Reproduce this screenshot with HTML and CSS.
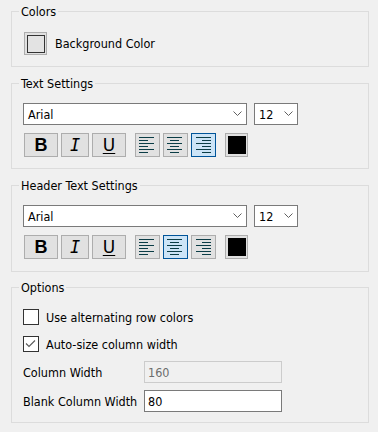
FILE: index.html
```html
<!DOCTYPE html>
<html lang="en">
<head>
    <meta charset="UTF-8">
    <meta name="viewport" content="width=device-width, initial-scale=1.0">
    <title>Grid Settings</title>
    <link rel="stylesheet" href="styles.css">
</head>
<body>
    <fieldset class="group group-colors">
        <legend>Colors</legend>
        <div class="group-body">
            <div class="color-row">
                <button class="swatch-btn swatch-btn-bg"><span class="swatch swatch-bg"></span></button>
                <span class="color-label">Background Color</span>
            </div>
        </div>
    </fieldset>

    <fieldset class="group group-text">
        <legend>Text Settings</legend>
        <div class="group-body">
            <div class="font-row">
                <div class="combo combo-font">
                    <span>Arial</span>
                    <svg class="chevron" width="10" height="6" viewBox="0 0 10 6"><polyline points="0.5,0.5 4.5,4.5 8.5,0.5" /></svg>
                </div>
                <div class="combo combo-size">
                    <span>12</span>
                    <svg class="chevron" width="10" height="6" viewBox="0 0 10 6"><polyline points="0.5,0.5 4.5,4.5 8.5,0.5" /></svg>
                </div>
            </div>
            <div class="style-row">
                <button class="tool-btn btn-b">B</button>
                <button class="tool-btn btn-i">I</button>
                <button class="tool-btn btn-u">U</button>
                <button class="tool-btn btn-align btn-first-align">
                    <svg width="23" height="22" viewBox="0 0 23 22"><rect x="3" y="3" width="15" height="1"/><rect x="3" y="6" width="9" height="1"/><rect x="3" y="9" width="15" height="1"/><rect x="3" y="12" width="9" height="1"/><rect x="3" y="15" width="15" height="1"/><rect x="3" y="18" width="9" height="1"/></svg>
                </button>
                <button class="tool-btn btn-align">
                    <svg width="23" height="22" viewBox="0 0 23 22"><rect x="3" y="3" width="15" height="1"/><rect x="6" y="6" width="9" height="1"/><rect x="3" y="9" width="15" height="1"/><rect x="6" y="12" width="9" height="1"/><rect x="3" y="15" width="15" height="1"/><rect x="6" y="18" width="9" height="1"/></svg>
                </button>
                <button class="tool-btn btn-align btn-last-align selected">
                    <svg width="23" height="22" viewBox="0 0 23 22"><rect x="4" y="3" width="15" height="1"/><rect x="10" y="6" width="9" height="1"/><rect x="4" y="9" width="15" height="1"/><rect x="10" y="12" width="9" height="1"/><rect x="4" y="15" width="15" height="1"/><rect x="10" y="18" width="9" height="1"/></svg>
                </button>
                <button class="swatch-btn swatch-btn-text"><span class="swatch swatch-black"></span></button>
            </div>
        </div>
    </fieldset>

    <fieldset class="group group-header">
        <legend>Header Text Settings</legend>
        <div class="group-body">
            <div class="font-row">
                <div class="combo combo-font">
                    <span>Arial</span>
                    <svg class="chevron" width="10" height="6" viewBox="0 0 10 6"><polyline points="0.5,0.5 4.5,4.5 8.5,0.5" /></svg>
                </div>
                <div class="combo combo-size">
                    <span>12</span>
                    <svg class="chevron" width="10" height="6" viewBox="0 0 10 6"><polyline points="0.5,0.5 4.5,4.5 8.5,0.5" /></svg>
                </div>
            </div>
            <div class="style-row">
                <button class="tool-btn btn-b">B</button>
                <button class="tool-btn btn-i">I</button>
                <button class="tool-btn btn-u">U</button>
                <button class="tool-btn btn-align btn-first-align">
                    <svg width="23" height="22" viewBox="0 0 23 22"><rect x="3" y="3" width="15" height="1"/><rect x="3" y="6" width="9" height="1"/><rect x="3" y="9" width="15" height="1"/><rect x="3" y="12" width="9" height="1"/><rect x="3" y="15" width="15" height="1"/><rect x="3" y="18" width="9" height="1"/></svg>
                </button>
                <button class="tool-btn btn-align selected">
                    <svg width="23" height="22" viewBox="0 0 23 22"><rect x="3" y="3" width="15" height="1"/><rect x="6" y="6" width="9" height="1"/><rect x="3" y="9" width="15" height="1"/><rect x="6" y="12" width="9" height="1"/><rect x="3" y="15" width="15" height="1"/><rect x="6" y="18" width="9" height="1"/></svg>
                </button>
                <button class="tool-btn btn-align btn-last-align">
                    <svg width="23" height="22" viewBox="0 0 23 22"><rect x="4" y="3" width="15" height="1"/><rect x="10" y="6" width="9" height="1"/><rect x="4" y="9" width="15" height="1"/><rect x="10" y="12" width="9" height="1"/><rect x="4" y="15" width="15" height="1"/><rect x="10" y="18" width="9" height="1"/></svg>
                </button>
                <button class="swatch-btn swatch-btn-text"><span class="swatch swatch-black"></span></button>
            </div>
        </div>
    </fieldset>

    <fieldset class="group group-options">
        <legend>Options</legend>
        <div class="group-body">
            <div class="check-row">
                <span class="checkbox"></span>
                <span>Use alternating row colors</span>
            </div>
            <div class="check-row check-row-second">
                <span class="checkbox">
                    <svg width="14" height="14" viewBox="0 0 14 14"><polyline points="2,6.5 5,9.5 11,3.5" /></svg>
                </span>
                <span>Auto-size column width</span>
            </div>
            <div class="field-row field-row-first">
                <span class="field-label">Column Width</span>
                <div class="text-input disabled">160</div>
            </div>
            <div class="field-row">
                <span class="field-label">Blank Column Width</span>
                <div class="text-input">80</div>
            </div>
        </div>
    </fieldset>
</body>
</html>
```

FILE: styles.css
```css
body {
    margin: 0;
    padding: 4px 0 0 11px;
    background-color: #f0f0f0;
    color: #000;
    font-family: "DejaVu Sans Condensed", "DejaVu Sans", sans-serif;
    font-size: 12.5px;
}

/* group boxes */
.group {
    box-sizing: border-box;
    width: 358px;
    margin: 0;
    padding: 0;
    border: 1px solid #dcdcdc;
    min-width: 0;
}

.group legend {
    margin-left: 7px;
    padding: 0 2px;
    line-height: 15px;
}

.group-text,
.group-header {
    margin-top: 9px;
}

.group-options {
    margin-top: 8px;
}

.group-body {
    padding: 12px 11px 11px;
}

.group-colors .group-body {
    padding-top: 13px;
}

.group-header .group-body {
    padding-bottom: 12px;
}

.group-options .group-body {
    padding-top: 14px;
    padding-bottom: 10px;
}

/* color swatches */
.color-row {
    display: flex;
    align-items: center;
    gap: 8px;
}

.swatch-btn {
    box-sizing: border-box;
    display: flex;
    padding: 0 0 0 2px;
    align-items: center;
    border: 1px solid #adadad;
    background-color: #e1e1e1;
}

.swatch-btn-bg {
    width: 23px;
    height: 23px;
    margin-left: 1px;
}

.swatch-btn-text {
    width: 23px;
    height: 24px;
    margin-left: 9px;
}

.swatch {
    box-sizing: border-box;
    display: block;
    width: 18px;
    height: 18px;
}

.swatch-bg {
    border: 1px solid #333;
    background-color: #e3e3e3;
}

.swatch-black {
    background-color: #000;
}

/* font combos */
.font-row {
    display: flex;
    gap: 7px;
}

.combo {
    box-sizing: border-box;
    height: 22px;
    display: flex;
    align-items: center;
    justify-content: space-between;
    padding: 0 3px 0 4px;
    border: 1px solid #7a7a7a;
    background-color: #fff;
}

.combo-font {
    width: 224px;
}

.combo-size {
    width: 44px;
}

.chevron polyline {
    fill: none;
    stroke: #606060;
    stroke-width: 1;
}

/* style buttons */
.style-row {
    display: flex;
    margin-top: 8px;
    padding-left: 1px;
}

.tool-btn {
    box-sizing: border-box;
    height: 24px;
    padding: 0;
    margin-right: 3px;
    display: flex;
    align-items: center;
    justify-content: center;
    border: 1px solid #adadad;
    background-color: #e1e1e1;
    color: #000;
}

.btn-b {
    width: 34px;
    font-family: "Liberation Sans", Arial, sans-serif;
    font-weight: bold;
    font-size: 18px;
}

.btn-i {
    width: 28px;
    font-family: "DejaVu Sans Mono", monospace;
    font-style: italic;
    font-size: 17px;
}

.btn-u {
    width: 34px;
    font-family: "DejaVu Sans", sans-serif;
    font-size: 17px;
    text-decoration: underline;
    text-underline-offset: 2px;
    margin-right: 0;
}

.btn-align {
    width: 25px;
}

.btn-align svg {
    display: block;
    fill: #0b3d46;
}

.btn-first-align {
    margin-left: 9px;
}

.btn-last-align {
    margin-right: 0;
}

.tool-btn.selected {
    border-color: #005499;
    background-color: #cce4f7;
}

/* options */
.check-row {
    display: flex;
    align-items: center;
    gap: 7px;
    height: 16px;
}

.check-row-second {
    margin-top: 11px;
}

.checkbox {
    box-sizing: border-box;
    width: 16px;
    height: 16px;
    border: 1px solid #333;
    background-color: #fff;
}

.checkbox svg {
    display: block;
}

.checkbox polyline {
    fill: none;
    stroke: #5a5a5a;
    stroke-width: 1.1;
}

.field-row {
    display: flex;
    align-items: center;
    margin-top: 7px;
}

.field-row-first {
    margin-top: 9px;
}

.field-label {
    width: 121px;
}

.text-input {
    box-sizing: border-box;
    width: 138px;
    height: 22px;
    padding-left: 3px;
    display: flex;
    align-items: center;
    border: 1px solid #7a7a7a;
    background-color: #fff;
}

.text-input.disabled {
    border-color: #cccccc;
    background-color: #f0f0f0;
    color: #6d6d6d;
}
```
